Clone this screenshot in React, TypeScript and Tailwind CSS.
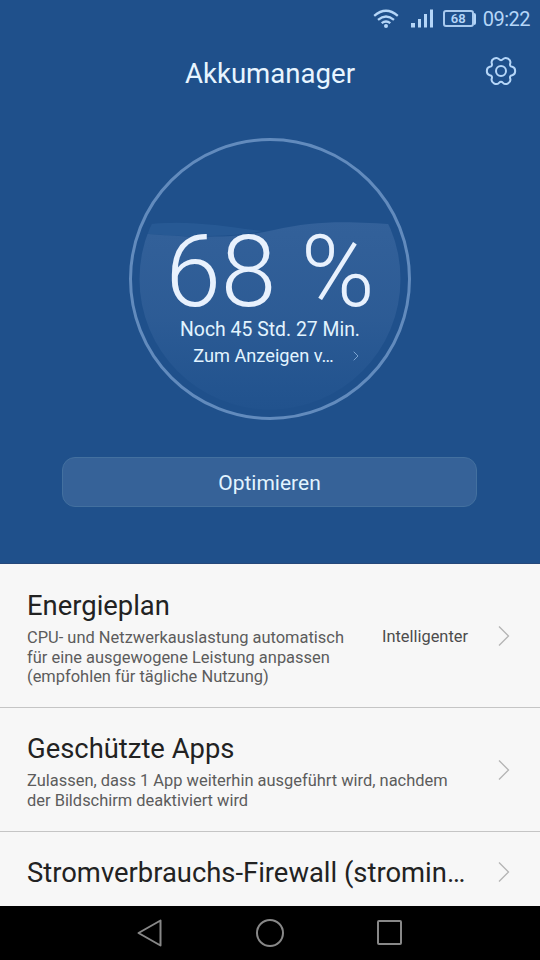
import * as React from "react";

const items = [
  {
    title: "Energieplan",
    lines: [
      "CPU- und Netzwerkauslastung automatisch",
      "für eine ausgewogene Leistung anpassen",
      "(empfohlen für tägliche Nutzung)",
    ],
    value: "Intelligenter",
    className: "h-36 border-b pt-[26px]",
    sideClassName: "mt-9",
  },
  {
    title: "Geschützte Apps",
    lines: [
      "Zulassen, dass 1 App weiterhin ausgeführt wird, nachdem",
      "der Bildschirm deaktiviert wird",
    ],
    className: "h-31 border-b pt-[25px]",
    sideClassName: "mt-[27px]",
  },
  {
    title: "Stromverbrauchs-Firewall (stromin…",
    lines: [],
    className: "h-[74px] pt-[25px]",
    sideClassName: "mt-[5px]",
  },
];

// six lobes, two shoulder points and one dent for each
function gearPath() {
  const pts: number[][] = [];
  for (let k = 0; k < 6; k++) {
    for (const [deg, r] of [
      [-14, 14.6],
      [14, 14.6],
      [30, 9.6],
    ]) {
      const a = ((k * 60 + deg) * Math.PI) / 180;
      pts.push([16 + r * Math.cos(a), 16 + r * Math.sin(a)]);
    }
  }
  const mid = (a: number[], b: number[]) =>
    `${((a[0] + b[0]) / 2).toFixed(2)} ${((a[1] + b[1]) / 2).toFixed(2)}`;
  let d = `M${mid(pts[pts.length - 1], pts[0])}`;
  pts.forEach((p, i) => {
    d += `Q${p[0].toFixed(2)} ${p[1].toFixed(2)} ${mid(p, pts[(i + 1) % pts.length])}`;
  });
  return d + "Z";
}

function StatusBar() {
  return (
    <div className="flex h-[37px] items-center justify-end pr-[10px] text-[#b5d6f8]">
      <svg width="26" height="20" viewBox="0 0 26 20" fill="none" stroke="currentColor" strokeWidth="2.3">
        <path d="M1.2 6.8Q13-3.4 24.8 6.8" />
        <path d="M5 10.8Q13 4.2 21 10.8" />
        <path d="M8.7 14.2Q13 10.8 17.3 14.2" />
        <circle cx="13" cy="17" r="2" fill="currentColor" stroke="none" />
      </svg>
      <svg className="ml-3 mr-[9px]" width="23" height="20" viewBox="0 0 23 20" fill="currentColor">
        <path d="M0 14h4v4.5H0zM7 10h3v8.5H7zM13 5h3v13.5h-3zM19 .5h3v18h-3z" />
      </svg>
      <div className="flex items-center">
        <div className="flex h-[17px] w-[31px] items-center justify-center rounded-[3px] border-2 border-[#a9caee] text-[13px] font-semibold leading-none">
          68
        </div>
        <div className="h-3 w-0.5 rounded-r-sm bg-[#b5d6f8]" />
      </div>
      <span className="ml-[7px] text-[20px] leading-none tracking-[-0.5px]">09:22</span>
    </div>
  );
}

function Gauge() {
  return (
    <div className="relative mx-auto h-[282px] w-[282px]">
      <svg className="absolute inset-0" width="282" height="282" viewBox="0 0 282 282" fill="none">
        <defs>
          <linearGradient id="water" x1="0" y1="84" x2="0" y2="272" gradientUnits="userSpaceOnUse">
            <stop offset="0" stopColor="#9bb8e6" stopOpacity="0.16" />
            <stop offset="0.5" stopColor="#9bb8e6" stopOpacity="0.11" />
            <stop offset="1" stopColor="#7fb0ee" stopOpacity="0.02" />
          </linearGradient>
          <clipPath id="bowl">
            <circle cx="141" cy="141" r="130.5" />
          </clipPath>
        </defs>
        <g clipPath="url(#bowl)">
          <path d="M0 89C50 80 85 87 133 93C112 98 60 101 0 94Z" fill="#5c92d0" fillOpacity="0.14" />
          <path d="M0 94C80 102 112 99 145 92C190 82 222 83 282 88V282H0Z" fill="url(#water)" />
        </g>
        <circle cx="141" cy="141" r="139.5" stroke="#628bbd" strokeWidth="3" />
      </svg>
      <div className="relative flex flex-col items-center pt-[87px]">
        <div className="text-[100px] font-light leading-[94px] text-[#e8f1fd]">68 %</div>
        <div className="text-[19.4px] leading-[22px] text-[#e2f4ff]">Noch 45 Std. 27 Min.</div>
        <div className="mt-1 flex items-center pl-3 text-[18.2px] leading-[22px] text-[#e2f4ff]">
          Zum Anzeigen v…
          <svg className="ml-[19px]" width="6" height="10" viewBox="0 0 6 10" fill="none" stroke="#7ba3d0">
            <path d="M.7.7L5 5L.7 9.3" />
          </svg>
        </div>
      </div>
    </div>
  );
}

function Chevron() {
  return (
    <svg className="shrink-0" width="12" height="22" viewBox="0 0 12 22" fill="none" stroke="#b4b4b4" strokeWidth="1.3">
      <path d="M1 1.5L10.5 11L1 20.5" />
    </svg>
  );
}

export default function App() {
  return (
    <div className="flex h-[960px] w-[540px] flex-col overflow-hidden bg-[#f7f7f7] font-['Roboto',sans-serif]">
      <section className="h-[564px] border-b border-[#26487a] bg-[#1f508b]">
        <StatusBar />
        <header className="grid h-[101px] grid-cols-[1fr_auto_1fr] items-start">
          <h1 className="col-start-2 pt-[21px] text-[27.6px] leading-8 text-[#e8f5ff]">Akkumanager</h1>
          <svg className="mr-[23px] mt-[18px] justify-self-end" width="32" height="32" viewBox="0 0 32 32" fill="none" stroke="#b5d6f8" strokeWidth="2">
            <path d={gearPath()} />
            <circle cx="16" cy="16" r="5" />
          </svg>
        </header>
        <Gauge />
        <button className="ml-[62px] mt-[37px] block h-[50px] w-[415px] rounded-[13px] border border-[#43709f] bg-[#366298] pt-[3px] text-[21px] text-[#e2f4ff]">
          Optimieren
        </button>
      </section>

      <main className="h-[342px]">
        {items.map((item) => (
          <div key={item.title} className={`flex border-[#c5c5c5] pl-[27px] pr-[30px] ${item.className}`}>
            <div className="flex-1 whitespace-nowrap">
              <h2 className="text-[27.4px] leading-8 text-[#222]">{item.title}</h2>
              <div className="mt-1.5 text-[16.45px] leading-[19.5px] text-[#5c5c5c]">
                {item.lines.map((line) => (
                  <p key={line}>{line}</p>
                ))}
              </div>
            </div>
            <div className={`flex h-5 items-center gap-[30px] ${item.sideClassName}`}>
              {item.value && <span className="pt-0.5 text-[16.4px] text-[#4c4c4c]">{item.value}</span>}
              <Chevron />
            </div>
          </div>
        ))}
      </main>

      <nav className="flex h-[54px] items-center justify-center gap-[92px] bg-black text-[#888]">
        <svg width="28" height="28" viewBox="0 0 28 28" fill="none" stroke="currentColor" strokeWidth="2" strokeLinejoin="round">
          <path d="M2.5 14L24.5 1.5V26.5Z" />
        </svg>
        <svg width="28" height="28" viewBox="0 0 28 28" fill="none" stroke="currentColor" strokeWidth="2">
          <circle cx="14" cy="14" r="13" />
        </svg>
        <svg width="28" height="28" viewBox="0 0 28 28" fill="none" stroke="currentColor" strokeWidth="2">
          <rect x="2" y="2" width="23" height="23" rx="1" />
        </svg>
      </nav>
    </div>
  );
}
